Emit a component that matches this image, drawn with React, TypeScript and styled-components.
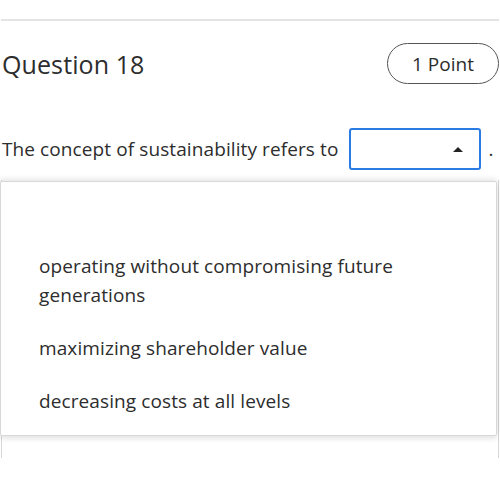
import React from "react";
import styled, { createGlobalStyle } from "styled-components";

const GlobalStyle = createGlobalStyle`
  html, body {
    margin: 0;
    padding: 0;
    background: #ffffff;
  }
  body {
    font-family: "Open Sans", "Noto Sans", sans-serif;
    color: #2d2d2d;
  }
`;

const Page = styled.div`
  position: relative;
  width: 500px;
  height: 487px;
  overflow: hidden;
  padding-top: 19px;
  box-sizing: border-box;
`;

const Divider = styled.div`
  height: 2px;
  margin: 0 1px;
  background: #e4e4e4;
`;

const Header = styled.div`
  display: flex;
  justify-content: space-between;
  align-items: center;
  padding: 22px 1px 0 2px;
`;

const Title = styled.h2`
  margin: 0;
  font-size: 25px;
  font-weight: 500;
  letter-spacing: 0.1px;
`;

const PointBadge = styled.div`
  width: 112px;
  height: 41px;
  box-sizing: border-box;
  border: 1px solid #555;
  border-radius: 21px;
  display: flex;
  align-items: center;
  justify-content: center;
  font-size: 19px;
  font-weight: 500;
`;

const Sentence = styled.div`
  display: flex;
  align-items: center;
  padding: 44px 0 0 2px;
  font-size: 19px;
  letter-spacing: 0.1px;
  white-space: nowrap;
`;

const SelectBox = styled.div`
  width: 132px;
  height: 42px;
  flex-shrink: 0;
  box-sizing: border-box;
  margin: 0 7px 0 11px;
  border: 2px solid #2a7be4;
  border-radius: 3px;
  display: flex;
  align-items: center;
  justify-content: flex-end;
  padding-right: 16px;
`;

const Caret = styled.span`
  width: 0;
  height: 0;
  border-left: 5px solid transparent;
  border-right: 5px solid transparent;
  border-bottom: 5px solid #222;
`;

const AnswerArea = styled.div`
  margin-top: 10px;
  height: 278px;
  border-left: 1px solid #d6d6d6;
  border-right: 1px solid #d6d6d6;
  margin-left: 1px;
  margin-right: 1px;
`;

const Menu = styled.ul`
  position: absolute;
  left: 0;
  top: 181px;
  width: 497px;
  box-sizing: border-box;
  margin: 0;
  padding: 5px 0 7px;
  list-style: none;
  background: #fff;
  border: 1px solid #d8d8d8;
  border-radius: 2px;
  box-shadow: 0 -3px 4px rgba(0, 0, 0, 0.08), 0 3px 5px rgba(0, 0, 0, 0.1);
`;

const Option = styled.li`
  padding: 12px 38px;
  font-size: 19px;
  line-height: 29px;
  min-height: 29px;
  letter-spacing: 0.1px;
  color: #2d2d2d;
`;

const options = [
  "operating without compromising future generations",
  "maximizing shareholder value",
  "decreasing costs at all levels",
];

export default function App() {
  return (
    <>
      <GlobalStyle />
      <Page>
        <Divider />
        <Header>
          <Title>Question 18</Title>
          <PointBadge>1 Point</PointBadge>
        </Header>
        <Sentence>
          The concept of sustainability refers to
          <SelectBox>
            <Caret />
          </SelectBox>
          .
        </Sentence>
        <AnswerArea />
        <Menu>
          <Option />
          {options.map((o) => (
            <Option key={o}>{o}</Option>
          ))}
        </Menu>
      </Page>
    </>
  );
}
